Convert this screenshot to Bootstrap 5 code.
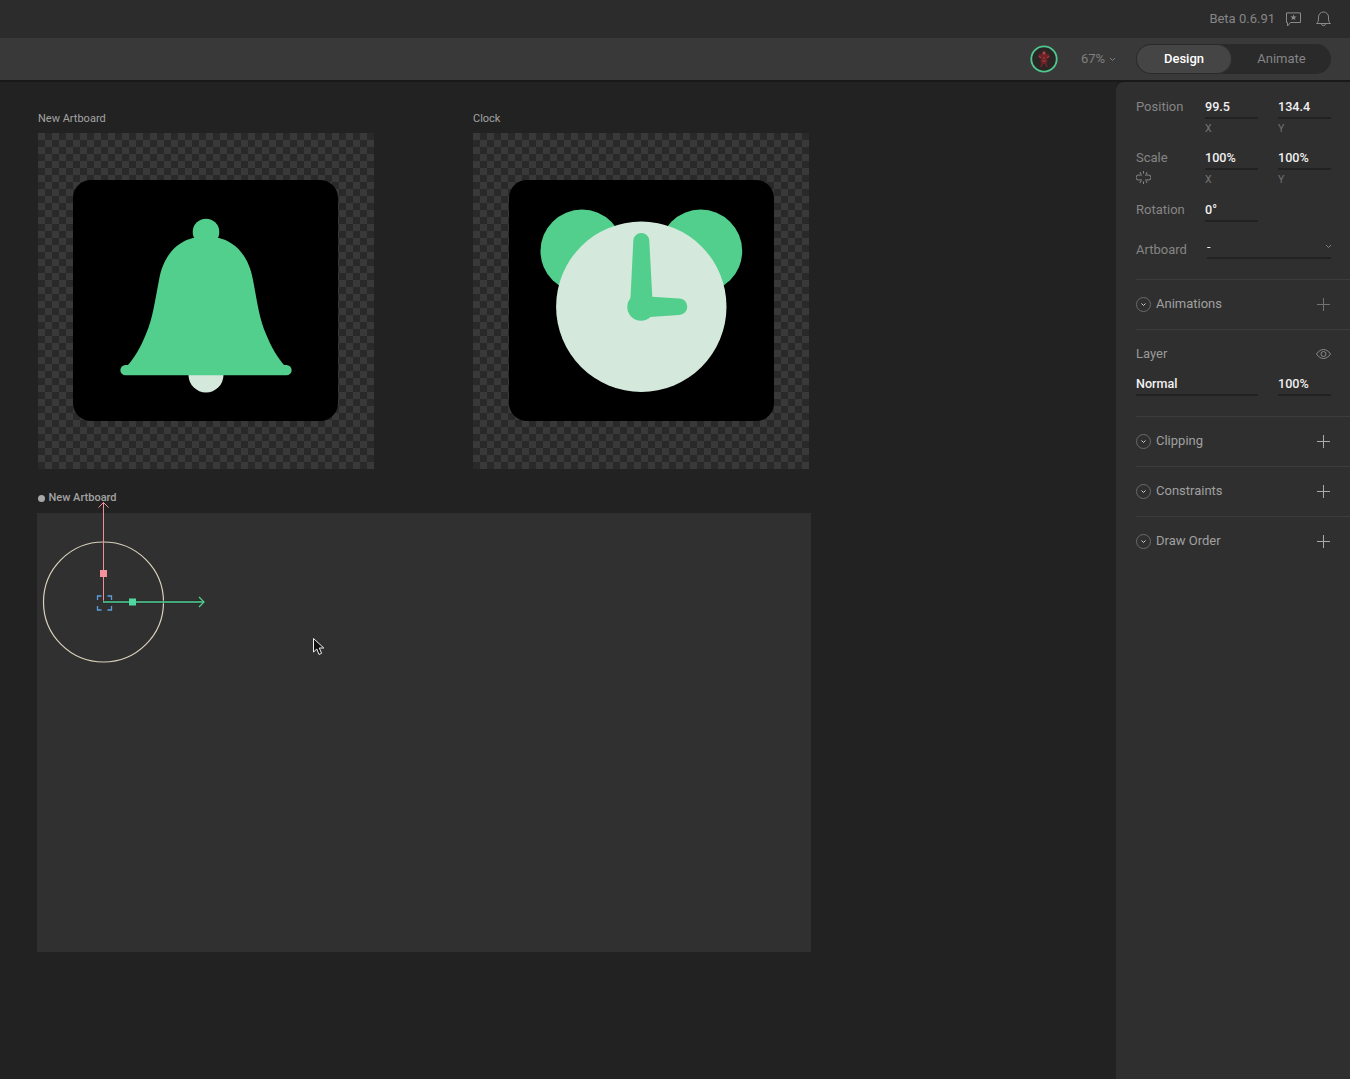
<!DOCTYPE html>
<html lang="en">
<head>
  <meta charset="UTF-8" />
  <meta name="viewport" content="width=device-width, initial-scale=1.0"/>
  <title>Rive Editor</title>
  <link href="https://cdn.jsdelivr.net/npm/bootstrap@5.3.0/dist/css/bootstrap.min.css" rel="stylesheet"/>
  <style>
    body { background: #222; font-family: Roboto, "Liberation Sans", sans-serif; font-size: 13px; color: #8f8f8f; height: 1079px; overflow: hidden; }
    .app-top { height: 38px; background: #2c2c2c; padding-right: 19px; color: #868686; }
    .note-icon { margin: 0 15px 0 11px; }
    .app-tools { height: 44px; background: #393939; border-bottom: 2px solid #191919; padding-right: 19px; }
    .zoom-val { width: 55px; margin-left: 23px; color: #808080; }
    .mode-switch { width: 195px; height: 30px; background: #2a2a2a; border-radius: 15px; }
    .mode-switch .btn { height: 30px; padding: 0; font-size: 13px; border: 0; border-radius: 15px; }
    .mode-switch .mode-on { width: 96px; background: #454545; color: #fff; font-weight: 500; box-shadow: 0 0 0 1px #2a2a2a inset; }
    .mode-switch .mode-off { flex: 1; color: #858585; }
    .work { height: 997px; }
    .stage { position: relative; flex: 1; background: #222; }
    .board-name { position: absolute; top: 30px; font-size: 11px; color: #a3a3a3; line-height: 14px; }
    .board-tile { position: absolute; top: 51px; width: 336px; height: 336px; background: repeating-conic-gradient(#292929 0 25%, #393939 0 50%) 0 0 / 14px 14px; }
    .board-tile svg { display: block; }
    .spot-a { left: 38px; }
    .spot-b { left: 473px; }
    .live-dot { width: 7px; height: 7px; border-radius: 50%; background: #a8a8a8; }
    .live-name { position: absolute; left: 37.5px; top: 409px; font-size: 11px; line-height: 14px; color: #a3a3a3; font-weight: 500; }
    .live-board { position: absolute; left: 37px; top: 431px; width: 774px; height: 439px; background: #303030; }
    .gizmo { position: absolute; left: 0; top: 0; pointer-events: none; }
    .inspector { width: 234px; background: #2f2f2f; border-top-left-radius: 8px; box-shadow: -1px 0 0 #1c1c1c; padding-left: 20px; }
    .field-grid { display: grid; grid-template-columns: 69px 53px 20px 53px; align-items: start; }
    .field-lbl { font-size: 13px; color: #858585; line-height: 16px; }
    .field-val { font-size: 12.6px; font-weight: 500; color: #f1f1f1; line-height: 16px; border-bottom: 2px solid #222; height: 20px; }
    .field-sub { font-size: 10.5px; color: #737373; line-height: 14px; padding-top: 3px; }
    .prop-block { padding-right: 19px; }
    .props-top { padding-top: 17px; padding-bottom: 20px; }
    .gap-14 { margin-top: 14px; }
    .gap-15 { margin-top: 15px; }
    .gap-17 { margin-top: 17px; }
    .art-lbl { padding-top: 3px; }
    .art-val { grid-column: 2 / 5; margin-left: 2px; font-weight: 400; }
    .art-val svg { margin-top: 5px; margin-right: -1px; }
    .link-icon { display: block; margin-top: 1px; }
    .sect-line { border-top: 1px solid #3c3c3c; }
    .sect-row { height: 49px; padding-right: 20px; color: #a0a0a0; font-size: 13px; }
    .sect-row svg { display: block; }
    .sect-name { margin-left: 5px; flex: 1; margin-top: -1px; }
    .adder-dim { opacity: .55; }
    .layer-block { height: 87px; padding-top: 16px; }
    .layer-name { color: #9a9a9a; }
    .layer-vals { margin-top: 14px; column-gap: 20px; }
    .wide-val { width: 122px; }
    .short-val { width: 53px; }
  </style>
</head>
<body class="d-flex flex-column">
  <div class="app-top d-flex align-items-center justify-content-end">
    <span>Beta 0.6.91</span>
    <svg class="note-icon" width="15" height="15" viewBox="0 0 15 15" fill="none" stroke="#8a8a8a"><path d="M.5.9H14.500V10.500H4.500L1.500 14V10.500H.5Z"/><polygon points="7.500,2.400 8.400,4.500 10.600,4.600 8.900,6 9.500,8.100 7.500,7 5.500,8.100 6.100,6 4.400,4.600 6.600,4.500" fill="#8a8a8a" stroke="none"/></svg>
    <svg width="15" height="16" viewBox="0 0 15 16" fill="none" stroke="#8a8a8a"><path d="M.5 12.500C2 11.500 2.500 10 2.500 7V6a5 5 0 0 1 10 0V7C12.500 10 13 11.500 14.500 12.500Z"/><path d="M5.500 12.700a2 2 0 0 0 4 0"/></svg>
  </div>

  <div class="app-tools d-flex align-items-center justify-content-end">
    <svg width="28" height="28" viewBox="0 0 28 28">
      <circle cx="14" cy="14" r="12.700" fill="#2a2626" stroke="#4fc98e" stroke-width="1.800"/>
      <path d="M13 6h2l1 3 3 0 1 3-3 2 .5 3-1 1 1.500 4h-2l-1-3h-2l-1 3H10l1.500-4-1-1 .5-3-3-2 1-3 3 0z" fill="#6e2226"/>
      <circle cx="14" cy="8" r="1.500" fill="#a8444a"/>
      <path d="M9 11.500l2 1M19 11.500l-2 1M13 13h2M12.500 16h3" stroke="#a8444a" fill="none"/>
    </svg>
    <div class="zoom-val d-flex align-items-center gap-1">67%
      <svg width="7" height="5" viewBox="0 0 7 5" fill="none" stroke="#808080"><path d="M1 1l2.500 2.500L6 1"/></svg>
    </div>
    <div class="mode-switch d-flex">
      <button type="button" class="btn mode-on">Design</button>
      <button type="button" class="btn mode-off">Animate</button>
    </div>
  </div>

  <div class="work d-flex">
    <div class="stage">
      <div class="board-name spot-a">New Artboard</div>
      <div class="board-tile spot-a">
        <svg width="336" height="336" viewBox="38 133 336 336">
          <rect x="73" y="180" width="265" height="241" rx="18" fill="#000"/>
          <circle cx="206" cy="375" r="17.500" fill="#d4e9dc"/>
          <circle cx="206" cy="232" r="13.300" fill="#52cf8c"/>
          <path d="M193 238C180 241 164 252 159 280C155 300 153 318 146 334C140 349 134 358 128 365H125.500A5.100 5.100 0 0 0 125.500 375.300H286.500A5.100 5.100 0 0 0 286.500 365H284C278 358 272 349 266 334C259 318 257 300 253 280C248 252 232 241 219 238Z" fill="#52cf8c"/>
        </svg>
      </div>
      <div class="board-name spot-b">Clock</div>
      <div class="board-tile spot-b">
        <svg width="336" height="336" viewBox="473 133 336 336">
          <rect x="509" y="180" width="265" height="241" rx="18" fill="#000"/>
          <circle cx="582" cy="251" r="41.500" fill="#52cf8c"/>
          <circle cx="700.700" cy="251" r="41.500" fill="#52cf8c"/>
          <circle cx="641.300" cy="306.700" r="85.200" fill="#d4e9dc"/>
          <circle cx="641" cy="307" r="13.700" fill="#52cf8c"/>
          <path d="M633.300 241A8 8 0 0 1 649.300 241L652.300 297L652 312H631L630.500 298Z" fill="#52cf8c"/>
          <path d="M652 296.700L679 298.400A8.300 8.300 0 0 1 679 315L650 317L640 310Z" fill="#52cf8c"/>
        </svg>
      </div>

      <div class="live-name d-flex align-items-center gap-1"><span class="live-dot"></span>New Artboard</div>
      <div class="live-board"></div>

      <svg class="gizmo" width="400" height="600" viewBox="0 82 400 600" fill="none">
        <circle cx="103.500" cy="602" r="60" stroke="#d9d2bb" stroke-width="1.200"/>
        <path d="M103.500 502V602" stroke="#ef8f98"/>
        <path d="M98.500 507.500L103.500 502.500L108.500 507.500" stroke="#ef8f98"/>
        <rect x="100" y="570" width="7" height="7" fill="#f3929c"/>
        <path d="M103 602H204" stroke="#191919" stroke-width="3" opacity=".5"/>
        <path d="M103 602H204" stroke="#4fd494" stroke-width="1.500"/>
        <path d="M199 597L204 602L199 607" stroke="#4fd494" stroke-width="1.200"/>
        <rect x="129" y="598.500" width="7" height="7" fill="#4fd8a0"/>
        <path d="M97.500 600V596H101.500M107.500 596H111.500V600M111.500 606V610H107.500M101.500 610H97.500V606" stroke="#5a9fdc" stroke-width="1.300"/>
        <path d="M313.500 638.500V652L316.800 649L319 654.500L321.600 653.300L319.300 648H323.800Z" fill="#111" stroke="#eee"/>
      </svg>
    </div>

    <div class="inspector">
      <div class="prop-block props-top">
        <div class="field-grid">
          <div class="field-lbl">Position</div><div class="field-val">99.5</div><div></div><div class="field-val">134.4</div>
          <div></div><div class="field-sub">X</div><div></div><div class="field-sub">Y</div>
        </div>
        <div class="field-grid gap-14">
          <div class="field-lbl">Scale</div><div class="field-val">100%</div><div></div><div class="field-val">100%</div>
          <div><svg class="link-icon" width="15" height="13" viewBox="0 0 15 13" fill="none" stroke="#8a8a8a"><path d="M6 4H2.500a2.500 2.500 0 0 0 0 5H6M9 4H12.500a2.500 2.500 0 0 1 0 5H9M7.500 0V2.500M7.500 10.500V13M4 1L5 3M11 1L10 3M4 12L5 10M11 12L10 10"/></svg></div><div class="field-sub">X</div><div></div><div class="field-sub">Y</div>
        </div>
        <div class="field-grid gap-15">
          <div class="field-lbl">Rotation</div><div class="field-val">0°</div>
        </div>
        <div class="field-grid gap-17">
          <div class="field-lbl art-lbl">Artboard</div>
          <div class="field-val art-val d-flex justify-content-between">
            <span>-</span>
            <svg width="7" height="5" viewBox="0 0 7 5" fill="none" stroke="#808080"><path d="M1 1l2.500 2.500L6 1"/></svg>
          </div>
        </div>
      </div>

      <div class="sect-line">
        <div class="sect-row d-flex align-items-center">
          <svg width="15" height="15" viewBox="0 0 15 15" fill="none"><circle cx="7.500" cy="7.500" r="7" stroke="#6a6a6a"/><path d="M5.500 6.500l2 2 2-2" stroke="#d0d0d0"/></svg>
          <span class="sect-name">Animations</span>
          <svg class="adder-dim" width="13" height="13" viewBox="0 0 13 13" fill="none" stroke="#aaa"><path d="M6.500 0V13M0 6.500H13"/></svg>
        </div>
      </div>

      <div class="sect-line prop-block layer-block">
        <div class="d-flex justify-content-between align-items-center">
          <span class="field-lbl layer-name">Layer</span>
          <svg width="15" height="10" viewBox="0 0 15 10" fill="none" stroke="#8a8a8a"><path d="M.5 5C2.500 2 5 .5 7.500 .5S12.500 2 14.500 5C12.500 8 10 9.500 7.500 9.500S2.500 8 .5 5Z"/><circle cx="7.500" cy="5" r="2.500"/></svg>
        </div>
        <div class="d-flex layer-vals">
          <div class="field-val wide-val">Normal</div>
          <div class="field-val short-val">100%</div>
        </div>
      </div>

      <div class="sect-line">
        <div class="sect-row d-flex align-items-center">
          <svg width="15" height="15" viewBox="0 0 15 15" fill="none"><circle cx="7.500" cy="7.500" r="7" stroke="#6a6a6a"/><path d="M5.500 6.500l2 2 2-2" stroke="#d0d0d0"/></svg>
          <span class="sect-name">Clipping</span>
          <svg width="13" height="13" viewBox="0 0 13 13" fill="none" stroke="#aaa"><path d="M6.500 0V13M0 6.500H13"/></svg>
        </div>
      </div>
      <div class="sect-line">
        <div class="sect-row d-flex align-items-center">
          <svg width="15" height="15" viewBox="0 0 15 15" fill="none"><circle cx="7.500" cy="7.500" r="7" stroke="#6a6a6a"/><path d="M5.500 6.500l2 2 2-2" stroke="#d0d0d0"/></svg>
          <span class="sect-name">Constraints</span>
          <svg width="13" height="13" viewBox="0 0 13 13" fill="none" stroke="#aaa"><path d="M6.500 0V13M0 6.500H13"/></svg>
        </div>
      </div>
      <div class="sect-line">
        <div class="sect-row d-flex align-items-center">
          <svg width="15" height="15" viewBox="0 0 15 15" fill="none"><circle cx="7.500" cy="7.500" r="7" stroke="#6a6a6a"/><path d="M5.500 6.500l2 2 2-2" stroke="#d0d0d0"/></svg>
          <span class="sect-name">Draw Order</span>
          <svg width="13" height="13" viewBox="0 0 13 13" fill="none" stroke="#aaa"><path d="M6.500 0V13M0 6.500H13"/></svg>
        </div>
      </div>
    </div>
  </div>

  <script src="https://cdn.jsdelivr.net/npm/bootstrap@5.3.0/dist/js/bootstrap.bundle.min.js"></script>
</body>
</html>
